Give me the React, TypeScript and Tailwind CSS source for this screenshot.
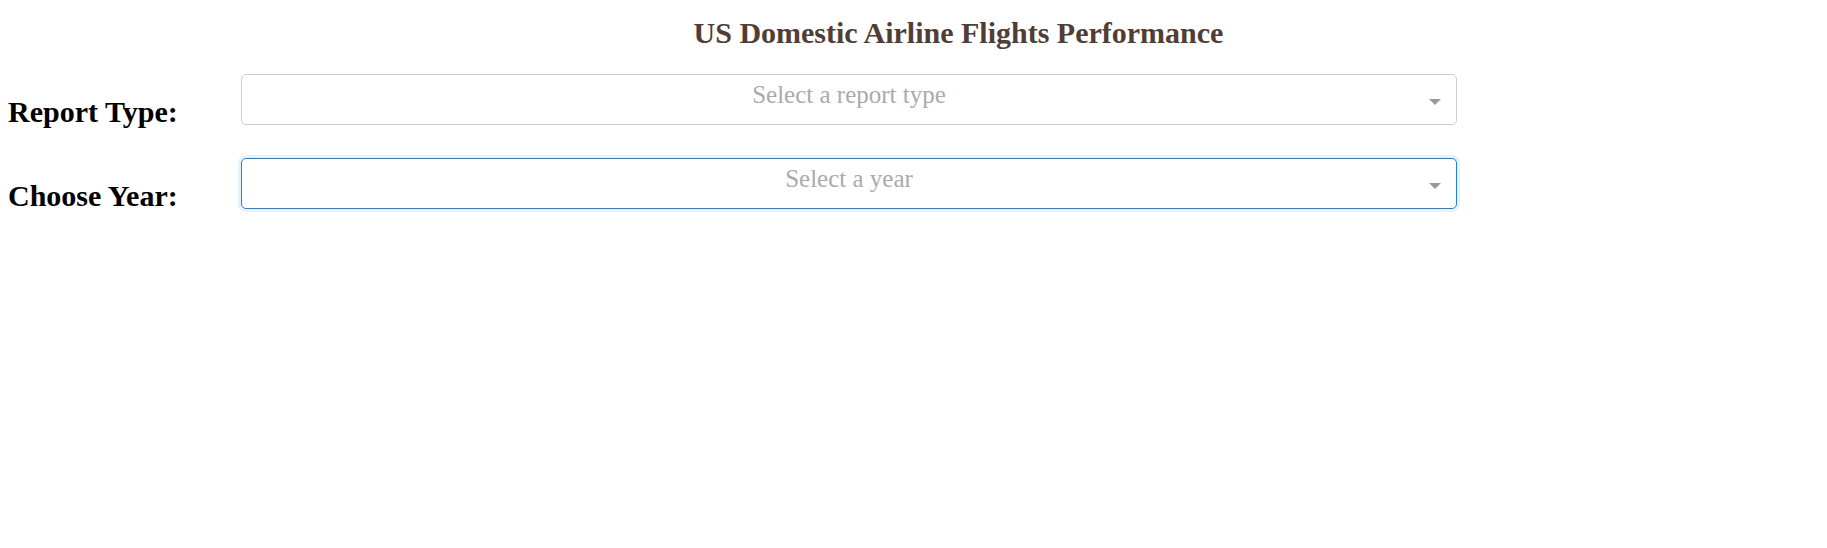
import React from "react";

function Dropdown({ placeholder, focused }: { placeholder: string; focused?: boolean }) {
  return (
    <div
      className={
        "relative box-border h-[51px] w-[1216px] rounded-[5px] border bg-white " +
        (focused
          ? "border-[#1f80dc] shadow-[0_0_0_3px_rgba(0,126,255,0.1)]"
          : "border-[#cccccc]")
      }
    >
      <div className="pt-[6px] text-center text-[25px] leading-[28px] text-[#aaaaaa]">{placeholder}</div>
      <div className="absolute right-[15px] top-[24px] h-0 w-0 border-x-[6.5px] border-t-[6px] border-x-transparent border-t-[#999999]" />
    </div>
  );
}

function Row({ label, placeholder, focused, className }: { label: string; placeholder: string; focused?: boolean; className?: string }) {
  return (
    <div className={"flex h-[51px] pl-[8px] " + (className ?? "")}>
      <div className="w-[233px] shrink-0 pt-[21px] text-[30px] font-bold leading-[34px] text-black">{label}</div>
      <Dropdown placeholder={placeholder} focused={focused} />
    </div>
  );
}

export default function App() {
  return (
    <div className="min-h-[548px] w-full bg-white font-['Liberation_Serif',serif]">
      <h1 className="pl-[90px] pt-[16px] text-center text-[30px] font-bold leading-[34px] text-[#503D36]">
        US Domestic Airline Flights Performance
      </h1>
      <Row className="mt-[24px]" label="Report Type:" placeholder="Select a report type" />
      <Row className="mt-[33px]" label="Choose Year:" placeholder="Select a year" focused />
    </div>
  );
}
